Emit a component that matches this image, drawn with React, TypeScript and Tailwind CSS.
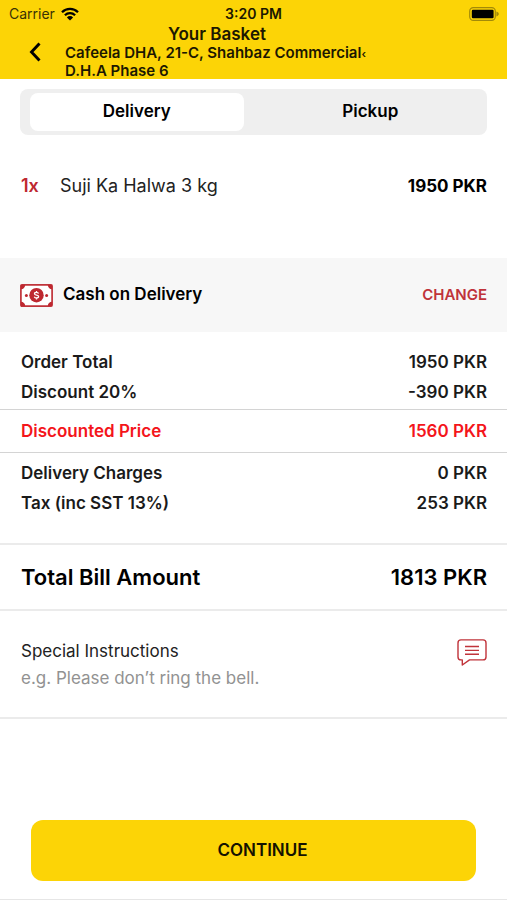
import { useState } from 'react';
import clsx from 'clsx';

type Mode = 'Delivery' | 'Pickup';

interface BillLine {
  label: string;
  value: string;
}

const modes: Mode[] = ['Delivery', 'Pickup'];

const orderLines: BillLine[] = [
  { label: 'Order Total', value: '1950 PKR' },
  { label: 'Discount 20%', value: '-390 PKR' },
];

const chargeLines: BillLine[] = [
  { label: 'Delivery Charges', value: '0 PKR' },
  { label: 'Tax (inc SST 13%)', value: '253 PKR' },
];

function WifiIcon() {
  return (
    <svg viewBox="0 0 18 14" className="h-[14px] w-[18px]" fill="none" stroke="currentColor" strokeWidth="2.3" aria-hidden="true">
      <path d="M1 5.2a11.4 11.4 0 0 1 16 0" />
      <path d="M3.9 8.2a7.3 7.3 0 0 1 10.2 0" />
      <path d="M9 13.6 5.9 10.4a4.4 4.4 0 0 1 6.2 0z" fill="currentColor" stroke="none" />
    </svg>
  );
}

function BatteryIcon() {
  return (
    <svg viewBox="0 0 30 14" className="h-[14px] w-[30px]" aria-hidden="true">
      <rect x="0.7" y="0.6" width="25.6" height="12.8" rx="3.6" fill="none" stroke="#a38a08" strokeWidth="1.2" />
      <rect x="2.8" y="2.7" width="21.8" height="8.6" rx="1.2" fill="#000" />
      <path d="M27.4 4.6c1.6.6 2.4 1.400 2.400 2.400s-.8 1.800-2.400 2.400z" fill="#a38a08" />
    </svg>
  );
}

function BackIcon() {
  return (
    <svg viewBox="0 0 12 20" className="h-5 w-3" fill="none" stroke="currentColor" strokeWidth="2.9" aria-hidden="true">
      <path d="M10.5 1.5 2.500 10l8 8.500" />
    </svg>
  );
}

function CashIcon() {
  return (
    <svg viewBox="0 0 33 23" className="h-[23px] w-[33px]" aria-hidden="true">
      <rect x="0.9" y="0.9" width="31.2" height="21.2" rx="1" fill="#fff" stroke="#c0333a" strokeWidth="1.7" />
      <g fill="#be2830">
        <path d="M1 1h4.2A4.2 4.2 0 0 1 1 5.2z" />
        <path d="M32 1h-4.200A4.200 4.200 0 0 0 32 5.200z" />
        <path d="M1 22h4.200A4.200 4.200 0 0 0 1 17.800z" />
        <path d="M32 22h-4.200a4.200 4.200 0 0 1 4.200-4.200z" />
        <circle cx="16.500" cy="11.200" r="7.200" />
        <circle cx="6.400" cy="11.400" r="1.500" />
        <circle cx="26.600" cy="11.400" r="1.500" />
      </g>
      <path
        d="M18.600 9.500c-.3-.8-1.100-1.200-2.100-1.200-1.200 0-2 .5-2 1.400 0 2 4.100.9 4.100 2.900 0 .9-.9 1.400-2.100 1.400-1.100 0-1.900-.5-2.200-1.300M16.500 6.900v1.500M16.500 14v1.500"
        fill="none"
        stroke="#fff"
        strokeWidth="1.300"
      />
    </svg>
  );
}

function NoteIcon() {
  return (
    <svg viewBox="0 0 30 27" className="h-[27px] w-[30px]" fill="none" stroke="#c0333a" strokeWidth="1.4" strokeLinejoin="round" aria-hidden="true">
      <path d="M4 .9h22a3 3 0 0 1 3 3v14a3 3 0 0 1-3 3H12.500L5.300 26V20.900H4a3 3 0 0 1-3-3v-14a3 3 0 0 1 3-3z" />
      <path d="M8 7.500h14M8 11.400h14M8 15.300h14" />
    </svg>
  );
}

function BillLines({ lines }: { lines: BillLine[] }) {
  return (
    <dl className="space-y-[6px] pr-5 pl-[21px] text-[17px] leading-6 font-semibold text-[#1a1a1a]">
      {lines.map((line) => (
        <div key={line.label} className="flex justify-between">
          <dt>{line.label}</dt>
          <dd>{line.value}</dd>
        </div>
      ))}
    </dl>
  );
}

export default function App() {
  const [mode, setMode] = useState<Mode>('Delivery');
  const [note, setNote] = useState('');

  return (
    <div className="flex min-h-screen flex-col border-b border-[#e6e6e6] bg-white font-['Inter',sans-serif] text-black">
      <header className="h-[79px] bg-[#fcd406]">
        <div className="grid grid-cols-3 items-center px-2 pt-1 text-sm">
          <div className="flex items-center gap-[6px] pl-px">
            <span className="text-[#3a3205]">Carrier</span>
            <WifiIcon />
          </div>
          <span className="text-center font-semibold text-[#1c1801]">3:20 PM</span>
          <div className="flex justify-end">
            <BatteryIcon />
          </div>
        </div>
        <div className="flex">
          <button aria-label="Back" className="flex w-[65px] items-center justify-center pr-0 pl-1">
            <BackIcon />
          </button>
          <div className="w-[304px] text-[#1c1801]">
            <h1 className="text-center text-[17px] leading-5 font-semibold">Your Basket</h1>
            <p className="text-[15px] leading-[18px] font-semibold whitespace-nowrap">
              Cafeela DHA, 21-C, Shahbaz Commercial<span className="text-[11px] leading-none">‹</span>
              <br />
              D.H.A Phase 6
            </p>
          </div>
        </div>
      </header>

      <div className="mx-5 mt-[10px] grid grid-cols-2 rounded-lg bg-[#efefef] py-1">
        {modes.map((m) => (
          <button
            key={m}
            onClick={() => setMode(m)}
            className={clsx('mx-[10px] h-[38px] rounded-lg text-[17px] font-semibold', m === mode && 'bg-white')}
          >
            {m}
          </button>
        ))}
      </div>

      <div className="mt-[39px] flex items-center pr-5 pl-[21px] text-lg leading-6">
        <span className="w-[39px] font-semibold text-[#be2830]">1x</span>
        <span className="text-[#222]">Suji Ka Halwa 3 kg</span>
        <span className="ml-auto text-[17px] font-bold">1950 PKR</span>
      </div>

      <section className="mt-[60px] flex h-[74px] items-center bg-[#f7f7f7] px-5">
        <CashIcon />
        <span className="ml-[10px] text-[17px] font-semibold">Cash on Delivery</span>
        <button className="ml-auto text-[15px] font-semibold text-[#c0333a]">CHANGE</button>
      </section>

      <div className="pt-[18px] pb-[5px]">
        <BillLines lines={orderLines} />
      </div>
      <div className="flex justify-between border-y border-[#d4d4d4] py-[9px] pr-5 pl-[21px] text-[17px] leading-6 font-semibold text-[#f4151b]">
        <span>Discounted Price</span>
        <span>1560 PKR</span>
      </div>
      <div className="pt-2 pb-7">
        <BillLines lines={chargeLines} />
      </div>

      <div className="flex items-center justify-between border-y-2 border-[#ebebeb] py-4 pr-5 pl-[21px] text-[22px] leading-8 font-semibold">
        <span>Total Bill Amount</span>
        <span>1813 PKR</span>
      </div>

      <div className="flex items-start justify-between border-b-2 border-[#ebebeb] pt-7 pr-5 pb-[27px] pl-[21px]">
        <div className="flex flex-1 flex-col gap-[3px] text-[17px] leading-6">
          <label htmlFor="note" className="text-[#222]">
            Special Instructions
          </label>
          <input
            id="note"
            value={note}
            onChange={(e) => setNote(e.target.value)}
            placeholder="e.g. Please don’t ring the bell."
            className="h-6 w-full outline-none placeholder:text-[#929292]"
          />
        </div>
        <NoteIcon />
      </div>

      <div className="mt-auto px-[31px] pb-[18px]">
        <button className="h-[61px] w-full rounded-xl bg-[#fcd406] pl-[18px] text-[17px] font-semibold text-[#141200]">CONTINUE</button>
      </div>
    </div>
  );
}
